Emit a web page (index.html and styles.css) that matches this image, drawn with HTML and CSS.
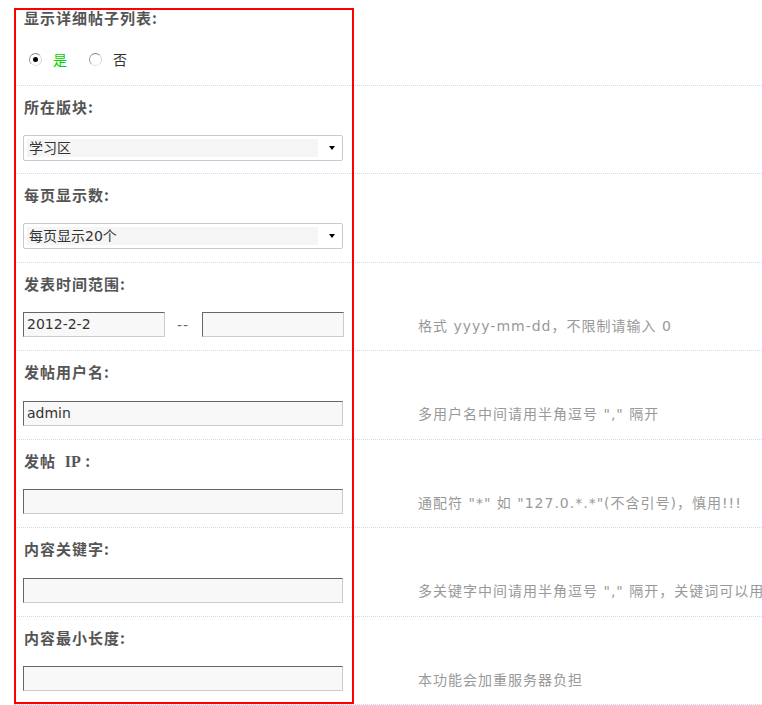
FILE: index.html
```html
<!DOCTYPE html>
<html lang="zh-CN">
<head>
<meta charset="utf-8">
<title>搜索帖子</title>
<link rel="stylesheet" href="styles.css">
</head>
<body>
<div class="page">
  <div class="row first">
    <div class="label">显示详细帖子列表:</div>
    <div class="field">
      <div class="ctrl radios">
        <span class="radio checked"></span><span class="opt on">是</span>
        <span class="radio"></span><span class="opt">否</span>
      </div>
    </div>
  </div>
  <div class="row">
    <div class="label">所在版块:</div>
    <div class="field">
      <div class="ctrl">
        <div class="select"><span class="sel-text">学习区</span><span class="arrow"></span></div>
      </div>
    </div>
  </div>
  <div class="row">
    <div class="label">每页显示数:</div>
    <div class="field">
      <div class="ctrl">
        <div class="select"><span class="sel-text">每页显示20个</span><span class="arrow"></span></div>
      </div>
    </div>
  </div>
  <div class="row">
    <div class="label">发表时间范围:</div>
    <div class="field">
      <div class="ctrl range">
        <div class="input short">2012-2-2</div>
        <span class="dash">--</span>
        <div class="input short"></div>
      </div>
      <div class="hint">格式 yyyy-mm-dd，不限制请输入 0</div>
    </div>
  </div>
  <div class="row">
    <div class="label">发帖用户名:</div>
    <div class="field">
      <div class="ctrl"><div class="input">admin</div></div>
      <div class="hint">多用户名中间请用半角逗号 "," 隔开</div>
    </div>
  </div>
  <div class="row">
    <div class="label">发帖 &nbsp;<span class="latin">IP</span> :</div>
    <div class="field">
      <div class="ctrl"><div class="input"></div></div>
      <div class="hint">通配符 "*" 如 "127.0.*.*"(不含引号)，慎用!!!</div>
    </div>
  </div>
  <div class="row">
    <div class="label">内容关键字:</div>
    <div class="field">
      <div class="ctrl"><div class="input"></div></div>
      <div class="hint">多关键字中间请用半角逗号 "," 隔开，关键词可以用限定符 {x} 来限定两个字之间可以相隔的字数</div>
    </div>
  </div>
  <div class="row">
    <div class="label">内容最小长度:</div>
    <div class="field">
      <div class="ctrl"><div class="input"></div></div>
      <div class="hint">本功能会加重服务器负担</div>
    </div>
  </div>
</div>
<div class="highlight"></div>
</body>
</html>
```
FILE: styles.css
```css
html, body {
  margin: 0;
  padding: 0;
  background: #fff;
  overflow: hidden;
}
body {
  font-family: "DejaVu Sans", "Noto Sans CJK SC", sans-serif;
  font-size: 14px;
  color: #333;
}
.page {
  padding-left: 14px;
}
.row {
  height: 88.43px;
  box-sizing: border-box;
  padding: 11px 0 0 9px;
  border-bottom: 1px dotted #c8dbec;
  overflow: hidden;
}
.row.first {
  height: 86px;
  padding-top: 8px;
}
.label {
  margin-left: 1px;
  height: 20px;
  line-height: 20px;
  font-family: "Noto Sans CJK SC", sans-serif;
  font-weight: bold;
  font-size: 15px;
  letter-spacing: 1px;
  color: #555;
  white-space: nowrap;
}
.label .latin {
  font-family: "Liberation Serif", serif;
  font-weight: bold;
  font-size: 16px;
  letter-spacing: 0;
}
.field {
  margin-top: 18px;
  height: 26px;
  display: flex;
  align-items: center;
  white-space: nowrap;
}
.ctrl {
  flex: 0 0 395px;
  display: flex;
  align-items: center;
}
.radios {
  padding-left: 6px;
  box-sizing: border-box;
}
.radio {
  width: 13px;
  height: 13px;
  box-sizing: border-box;
  border-radius: 50%;
  border: 1px solid;
  border-color: #8d8d8d #d6d6d6 #e2e2e2 #9a9a9a;
  background: #fff;
  display: flex;
  align-items: center;
  justify-content: center;
}
.radio.checked::after {
  content: "";
  width: 5px;
  height: 5px;
  border-radius: 50%;
  background: #000;
}
.opt {
  margin-left: 11px;
  margin-right: 22px;
  font-family: "Noto Sans CJK SC", sans-serif;
  font-size: 14px;
  color: #333;
}
.opt.on {
  color: #00d400;
}
.select {
  width: 320px;
  height: 26px;
  box-sizing: border-box;
  border: 1px solid #c6cbd1;
  border-radius: 2px;
  background: #fff;
  display: flex;
  align-items: center;
  padding-left: 3px;
}
.sel-text {
  width: 291px;
  height: 18px;
  line-height: 18px;
  background: #f5f5f5;
  padding-left: 2px;
  box-sizing: border-box;
  color: #333;
}
.arrow {
  margin-left: 11px;
  width: 0;
  height: 0;
  border-left: 3.5px solid transparent;
  border-right: 3.5px solid transparent;
  border-top: 4px solid #000;
}
.input {
  width: 320px;
  height: 25px;
  box-sizing: border-box;
  border-style: solid;
  border-width: 1px;
  border-color: #666 #cccccc #cccccc #666;
  background: #f8f8f8;
  padding-left: 3px;
  line-height: 23px;
  color: #333;
}
.input.short {
  width: 142px;
}
.dash {
  margin: 0 13px 0 12px;
  color: #666;
  letter-spacing: 1px;
}
.hint {
  color: #999;
  font-size: 14px;
  letter-spacing: 1px;
}
.highlight {
  position: absolute;
  left: 14px;
  top: 8px;
  width: 340px;
  height: 696px;
  box-sizing: border-box;
  border: 2px solid #ff0000;
  pointer-events: none;
}
```
